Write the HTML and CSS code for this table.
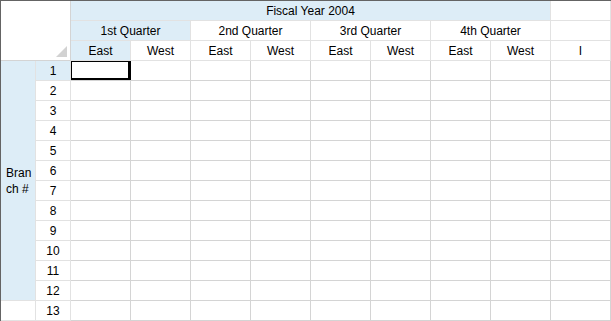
FILE: index.html
```html
<!DOCTYPE html>
<html>
<head>
<meta charset="utf-8">
<link rel="stylesheet" href="styles.css">
</head>
<body>
<div class="sheet">
  <div class="cell corner"><span class="tri"></span></div>
  <div class="cell hdr blue fiscal">Fiscal Year 2004</div>
  <div class="cell hdr c11 r1"></div>

  <div class="cell hdr blue q q1">1st Quarter</div>
  <div class="cell hdr q q2">2nd Quarter</div>
  <div class="cell hdr q q3">3rd Quarter</div>
  <div class="cell hdr q q4">4th Quarter</div>
  <div class="cell hdr c11 r2"></div>

  <div class="cell hdr blue r3">East</div>
  <div class="cell hdr r3">West</div>
  <div class="cell hdr r3">East</div>
  <div class="cell hdr r3">West</div>
  <div class="cell hdr r3">East</div>
  <div class="cell hdr r3">West</div>
  <div class="cell hdr r3">East</div>
  <div class="cell hdr r3">West</div>
  <div class="cell hdr r3">I</div>

  <div class="cell hdr blue branch">Branch #</div>
  <div class="cell hdr branch13"></div>

  <div class="cell rownum blue">1</div>
  <div class="cell sel"></div><div class="cell"></div><div class="cell"></div><div class="cell"></div><div class="cell"></div><div class="cell"></div><div class="cell"></div><div class="cell"></div><div class="cell"></div>
  <div class="cell rownum">2</div>
  <div class="cell"></div><div class="cell"></div><div class="cell"></div><div class="cell"></div><div class="cell"></div><div class="cell"></div><div class="cell"></div><div class="cell"></div><div class="cell"></div>
  <div class="cell rownum">3</div>
  <div class="cell"></div><div class="cell"></div><div class="cell"></div><div class="cell"></div><div class="cell"></div><div class="cell"></div><div class="cell"></div><div class="cell"></div><div class="cell"></div>
  <div class="cell rownum">4</div>
  <div class="cell"></div><div class="cell"></div><div class="cell"></div><div class="cell"></div><div class="cell"></div><div class="cell"></div><div class="cell"></div><div class="cell"></div><div class="cell"></div>
  <div class="cell rownum">5</div>
  <div class="cell"></div><div class="cell"></div><div class="cell"></div><div class="cell"></div><div class="cell"></div><div class="cell"></div><div class="cell"></div><div class="cell"></div><div class="cell"></div>
  <div class="cell rownum">6</div>
  <div class="cell"></div><div class="cell"></div><div class="cell"></div><div class="cell"></div><div class="cell"></div><div class="cell"></div><div class="cell"></div><div class="cell"></div><div class="cell"></div>
  <div class="cell rownum">7</div>
  <div class="cell"></div><div class="cell"></div><div class="cell"></div><div class="cell"></div><div class="cell"></div><div class="cell"></div><div class="cell"></div><div class="cell"></div><div class="cell"></div>
  <div class="cell rownum">8</div>
  <div class="cell"></div><div class="cell"></div><div class="cell"></div><div class="cell"></div><div class="cell"></div><div class="cell"></div><div class="cell"></div><div class="cell"></div><div class="cell"></div>
  <div class="cell rownum">9</div>
  <div class="cell"></div><div class="cell"></div><div class="cell"></div><div class="cell"></div><div class="cell"></div><div class="cell"></div><div class="cell"></div><div class="cell"></div><div class="cell"></div>
  <div class="cell rownum">10</div>
  <div class="cell"></div><div class="cell"></div><div class="cell"></div><div class="cell"></div><div class="cell"></div><div class="cell"></div><div class="cell"></div><div class="cell"></div><div class="cell"></div>
  <div class="cell rownum">11</div>
  <div class="cell"></div><div class="cell"></div><div class="cell"></div><div class="cell"></div><div class="cell"></div><div class="cell"></div><div class="cell"></div><div class="cell"></div><div class="cell"></div>
  <div class="cell rownum">12</div>
  <div class="cell"></div><div class="cell"></div><div class="cell"></div><div class="cell"></div><div class="cell"></div><div class="cell"></div><div class="cell"></div><div class="cell"></div><div class="cell"></div>
  <div class="cell rownum">13</div>
  <div class="cell"></div><div class="cell"></div><div class="cell"></div><div class="cell"></div><div class="cell"></div><div class="cell"></div><div class="cell"></div><div class="cell"></div><div class="cell"></div>
</div>
</body>
</html>
```

FILE: styles.css
```css
html, body {
  margin: 0;
  padding: 0;
  background: #ffffff;
}

.sheet {
  display: grid;
  grid-template-columns: 35px 35px repeat(9, 60px);
  grid-template-rows: repeat(16, 20px);
  width: 611px;
  height: 321px;
  box-sizing: border-box;
  border-top: 1px solid #646464;
  border-left: 1px solid #646464;
  font-family: "Liberation Sans", Arial, sans-serif;
  font-size: 12px;
  color: #000;
}

.cell {
  box-sizing: border-box;
  border-right: 1px solid #d4d4d4;
  border-bottom: 1px solid #d4d4d4;
  display: flex;
  align-items: center;
  justify-content: center;
  white-space: nowrap;
  line-height: 14px;
  position: relative;
}

.hdr {
  border-color: #e2e2e2;
}

.blue {
  background: #ddedf7;
}

.corner {
  grid-column: 1 / 3;
  grid-row: 1 / 4;
  align-items: flex-end;
  justify-content: flex-end;
  padding: 0 3px 3px 0;
}

.tri {
  width: 0;
  height: 0;
  border-style: solid;
  border-width: 0 0 11px 11px;
  border-color: transparent transparent #d2d2d2 transparent;
}

.fiscal {
  grid-column: 3 / 11;
  grid-row: 1;
}

.c11 { grid-column: 11; }
.r1 { grid-row: 1; }
.r2 { grid-row: 2; }
.r3 { grid-row: 3; }

.q { grid-row: 2; }
.q1 { grid-column: 3 / 5; }
.q2 { grid-column: 5 / 7; }
.q3 { grid-column: 7 / 9; }
.q4 { grid-column: 9 / 11; }

.branch {
  grid-column: 1;
  grid-row: 4 / 16;
  white-space: normal;
  word-break: break-all;
  justify-content: flex-start;
  padding: 0 1px 0 5px;
  line-height: 16px;
}

.branch13 {
  grid-column: 1;
  grid-row: 16;
}

.rownum {
  grid-column: 2;
  border-color: #e2e2e2;
}

.sel::after {
  content: "";
  position: absolute;
  top: 0;
  left: 0;
  right: -1px;
  bottom: 0;
  border-style: solid;
  border-color: #000;
  border-width: 1px 3px 2px 1px;
}
```
